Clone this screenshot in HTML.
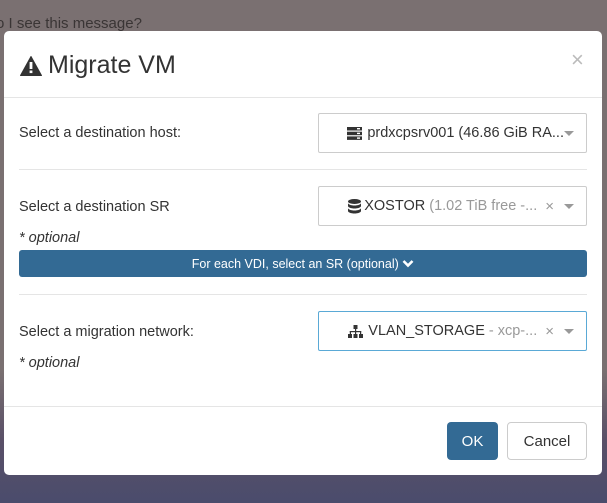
<!DOCTYPE html>
<html><head><meta charset="utf-8"><style>
*{box-sizing:border-box;margin:0;padding:0}
body{width:607px;height:503px;overflow:hidden;position:relative;font-family:"Liberation Sans",sans-serif;color:#333;
background:linear-gradient(#7a7071 0,#7a7071 370px,#5a5068 440px,#4a4c6c 503px)}
.bgtext{position:absolute;left:-4px;top:15px;font-size:15px;color:#3a3535}
.dlg{position:absolute;left:4px;top:31px;width:598px;height:444px;background:#fff;border-radius:5px}
.abs{position:absolute}
.title{left:16px;top:20px;font-size:25px;color:#333;display:flex;align-items:center;gap:6px}
.close{left:567px;top:16px;font-size:22px;color:#bbb}
.hr{position:absolute;height:1px;background:#e5e5e5}
.lbl{font-size:14.5px;color:#333}
.opt{font-size:14.5px;font-style:italic;color:#333}
.sel{position:absolute;left:314px;width:269px;height:40px;border:1px solid #ccc;border-radius:2px;font-size:14.5px;display:flex;align-items:center;justify-content:flex-end;padding-right:12px;white-space:nowrap}
.caret{display:inline-block;width:0;height:0;border-left:5px solid transparent;border-right:5px solid transparent;border-top:5px solid #999;margin-left:10px}
.x{color:#999;margin-left:8px;font-size:15px}
.g{color:#999}
.bar{left:15px;top:219px;width:568px;height:27px;background:#336a94;border-radius:3px;color:#fff;font-size:12.5px;display:flex;align-items:center;justify-content:center}
.btn{position:absolute;top:391px;height:38px;border-radius:4px;font-size:15px;display:flex;align-items:center;justify-content:center}
</style></head><body>
<div class="bgtext">o I see this message?</div>
<div class="dlg">
 <div class="abs title"><svg width="22" height="20" viewBox="0 0 22 20"><path d="M11 0.5 L21.5 19.5 L0.5 19.5 Z" fill="#333" stroke="#333" stroke-linejoin="round"/><rect x="9.6" y="6" width="2.8" height="7" fill="#fff"/><rect x="9.6" y="14.5" width="2.8" height="2.6" fill="#fff"/></svg>Migrate VM</div>
 <div class="abs close">×</div>
 <div class="hr" style="left:0;top:66px;width:598px"></div>
 <div class="abs lbl" style="left:15px;top:94px">Select a destination host:</div>
 <div class="sel" style="top:82px"><svg width="15" height="13" viewBox="0 0 15 13" style="margin-right:5px"><rect y="0" width="15" height="3.5" fill="#333"/><rect y="4.7" width="15" height="3.5" fill="#333"/><rect y="9.4" width="15" height="3.5" fill="#333"/><rect x="10" y="1" width="3" height="1.4" fill="#fff"/><rect x="10" y="5.7" width="3" height="1.4" fill="#fff"/><rect x="10" y="10.4" width="3" height="1.4" fill="#fff"/></svg>prdxcpsrv001 (46.86 GiB RA...<span class="caret" style="margin-left:0"></span></div>
 <div class="hr" style="left:15px;top:138px;width:568px"></div>
 <div class="abs lbl" style="left:15px;top:168px">Select a destination SR</div>
 <div class="sel" style="top:155px"><svg width="13" height="15" viewBox="0 0 13 15" style="margin-right:3px"><ellipse cx="6.5" cy="2.5" rx="6.5" ry="2.5" fill="#333"/><path d="M0 4v3c0 1.4 3 2.5 6.5 2.5S13 8.4 13 7V4c0 1.4-3 2.5-6.5 2.5S0 5.4 0 4z" fill="#333"/><path d="M0 9v3c0 1.4 3 2.5 6.5 2.5S13 13.4 13 12V9c0 1.4-3 2.5-6.5 2.5S0 10.4 0 9z" fill="#333"/></svg>XOSTOR&nbsp;<span class="g">(1.02 TiB free -...</span><span class="x">×</span><span class="caret"></span></div>
 <div class="abs opt" style="left:15px;top:199px">* optional</div>
 <div class="abs bar">For each VDI, select an SR (optional)&nbsp;<svg width="12" height="9" viewBox="0 0 12 9"><path d="M1.5 2 L6 6.5 L10.5 2" stroke="#fff" stroke-width="2.6" fill="none"/></svg></div>
 <div class="hr" style="left:15px;top:263px;width:568px"></div>
 <div class="abs lbl" style="left:15px;top:293px">Select a migration network:</div>
 <div class="sel" style="top:280px;border-color:#5aa9d6"><svg width="15" height="13" viewBox="0 0 15 13" style="margin-right:5px"><rect x="5.5" y="0" width="4" height="4" fill="#333"/><rect x="7" y="4" width="1.2" height="3" fill="#333"/><rect x="1.8" y="6" width="11.4" height="1.2" fill="#333"/><rect x="1.8" y="6" width="1.2" height="3" fill="#333"/><rect x="12" y="6" width="1.2" height="3" fill="#333"/><rect x="7" y="6" width="1.2" height="3" fill="#333"/><rect x="0" y="9" width="4" height="4" fill="#333"/><rect x="5.5" y="9" width="4" height="4" fill="#333"/><rect x="11" y="9" width="4" height="4" fill="#333"/></svg>VLAN_STORAGE&nbsp;<span class="g">- xcp-...</span><span class="x">×</span><span class="caret"></span></div>
 <div class="abs opt" style="left:15px;top:324px">* optional</div>
 <div class="hr" style="left:0;top:375px;width:598px"></div>
 <div class="btn" style="left:443px;width:51px;background:#336a94;color:#fff">OK</div>
 <div class="btn" style="left:503px;width:80px;border:1px solid #ccc;color:#333">Cancel</div>
</div>
</body></html>
